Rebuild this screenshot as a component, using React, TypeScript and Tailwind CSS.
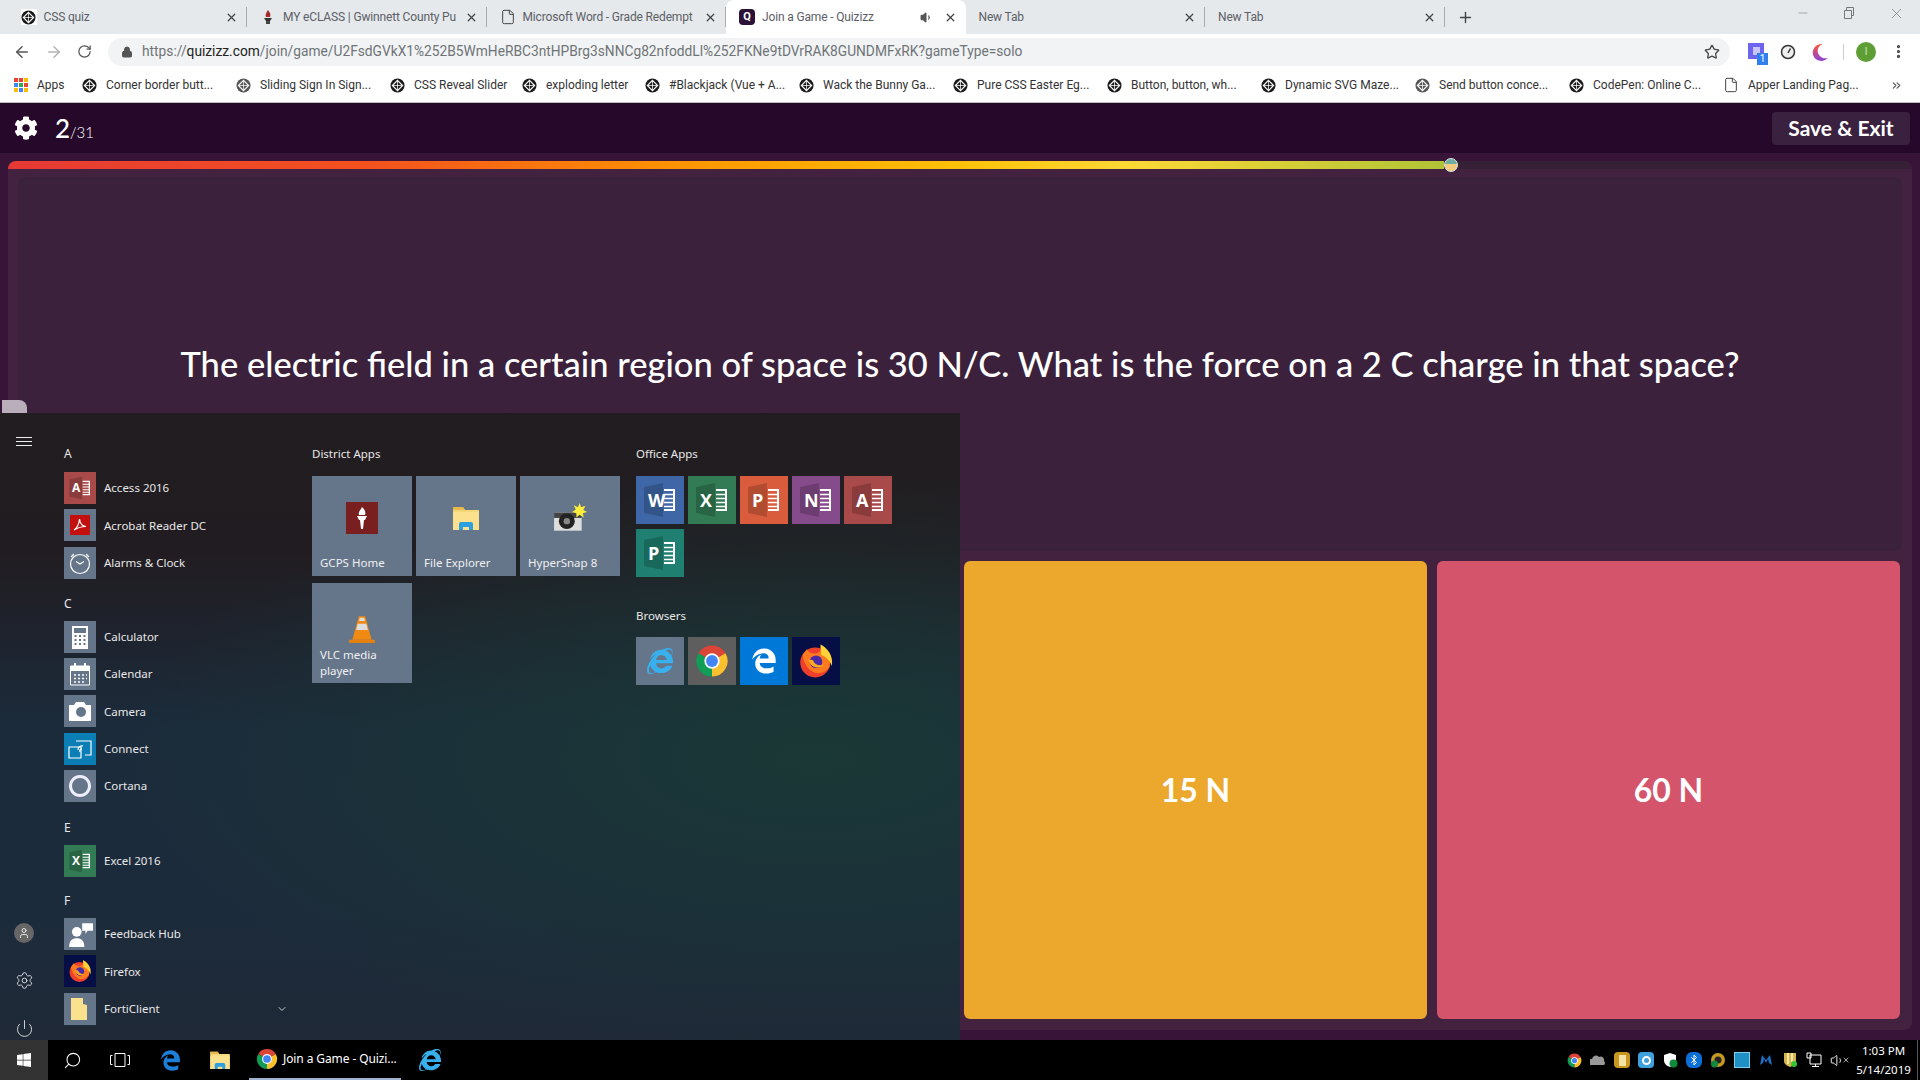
import { ReactNode } from "react";
import {
    ArrowLeft, ArrowRight, RotateCw, Lock, Star, MoreVertical, Settings, Power, Search,
    User, ChevronDown, Plus, X, Minus, ChevronsRight, Bluetooth, Volume1, File,
} from "lucide-react";
import { FaCog, FaInternetExplorer, FaEdgeLegacy, FaWindows } from "react-icons/fa";

function CodepenMark({ light = false }: { light?: boolean }) {
    return (
        <svg viewBox="0 0 16 16" className="w-[15px] h-[15px] shrink-0">
            <circle cx="8" cy="8" r="7.5" fill={light ? "#555" : "#1a1a1a"} />
            <path d="M8 2.5 13.5 8 8 13.5 2.5 8Z" fill="none" stroke="#fff" strokeWidth="1.2" />
            <path d="M8 2.5V13.5M2.5 8H13.5" stroke="#fff" strokeWidth="0.8" />
        </svg>
    );
}

function ChromeLogo({ size = 24 }: { size?: number }) {
    return (
        <svg viewBox="0 0 24 24" width={size} height={size} className="shrink-0">
            <path d="M12 12 2.47 6.5A11 11 0 0 1 21.53 6.5Z" fill="#db4437" />
            <path d="M12 12 2.47 6.5A11 11 0 0 0 12 23Z" fill="#0f9d58" />
            <path d="M12 12 21.53 6.5A11 11 0 0 1 12 23Z" fill="#fbc02d" />
            <circle cx="12" cy="12" r="5.4" fill="#fff" />
            <circle cx="12" cy="12" r="4.2" fill="#4285f4" />
        </svg>
    );
}

function FirefoxLogo({ size = 24 }: { size?: number }) {
    return (
        <svg viewBox="0 0 24 24" width={size} height={size} className="shrink-0">
            <circle cx="11.5" cy="13" r="10" fill="#ee3f2d" />
            <path d="M3 8C5 20 15 24 21 16 22 10 19 5 15 2 16 6 13 7 11 7 8 7 6 5 6 4Z" fill="#ff7a1f" />
            <path d="M15 1C19 3 24 8 22.500 15.500 21.500 11.500 18.500 9 15.500 8Z" fill="#ffd23a" />
            <circle cx="12" cy="12.500" r="4.200" fill="#4a2aa5" />
            <path d="M7 11C8 16 13 18 17.500 14.500 14 15.500 11 14.500 10 11.500Z" fill="#ffab1f" />
        </svg>
    );
}

function FolderIcon({ size = 32 }: { size?: number }) {
    return (
        <svg viewBox="0 0 32 32" width={size} height={size} className="shrink-0">
            <path d="M3 5h10l2 3h14v20H3Z" fill="#f5d77a" />
            <path d="M3 5h10l2 3H3Z" fill="#e9b949" />
            <path d="M3 10h26v18H3Z" fill="#fbe08e" />
            <path d="M9 22a2 2 0 0 1 2-2h10a2 2 0 0 1 2 2v6h-4v-3h-6v3H9Z" fill="#2c9fe0" />
        </svg>
    );
}

function Office({ bg, letter, size }: { bg: string; letter: string; size: number }) {
    return (
        <div className={`${bg} flex items-center justify-center shrink-0`} style={{ width: size, height: size }}>
            <svg viewBox="0 0 48 48" width={size} height={size}>
                <path d="M8 11 27 7V41L8 37Z" fill="#000" opacity="0.18" />
                <text x="12" y="30.5" fontSize="18" fontWeight="700" fontFamily="Open Sans, sans-serif" fill="#fff">{letter}</text>
                <path d="M28 14h10v20h-10" fill="none" stroke="#fff" strokeWidth="2" />
                <path d="M28 18.5h10M28 22.5h10M28 26.5h10M28 30.5h10" stroke="#fff" strokeWidth="1.6" />
            </svg>
        </div>
    );
}

function Tab({ icon, title, active = false, sound = false }: { icon?: ReactNode; title: string; active?: boolean; sound?: boolean }) {
    return (
        <div className={`relative w-[239.5px] h-[34px] shrink-0 flex items-center pl-[13px] pr-[9px] gap-[7px] text-[12px] tracking-[-0.15px] text-[#5c6066] ${active ? "bg-white rounded-t-lg" : ""}`}>
            {icon}
            <span className="flex-1 whitespace-nowrap">{title}</span>
            {sound && <Volume1 className="w-[13px] h-[13px] text-[#555] mr-1" fill="#555" />}
            <X className="w-[13px] h-[13px] text-[#444] shrink-0" strokeWidth={2.4} />
            {!active && <div className="absolute right-0 top-[7px] h-[20px] w-px bg-[#a8acb0]" />}
        </div>
    );
}

function Bookmark({ title, icon, light, width = "w-[154px]" }: { title: string; icon?: ReactNode; light?: boolean; width?: string }) {
    return (
        <div className={`${width} shrink-0 flex items-center gap-[9px] pl-2 text-[12px] text-[#333] whitespace-nowrap`}>
            {icon ?? <CodepenMark light={light} />}
            <span>{title}</span>
        </div>
    );
}

const bookmarks = [
    { title: "Corner border butt...", width: "w-[154px]" },
    { title: "Sliding Sign In Sign...", light: true, width: "w-[154px]" },
    { title: "CSS Reveal Slider", width: "w-[132px]" },
    { title: "exploding letter", width: "w-[123px]" },
    { title: "#Blackjack (Vue + A...", width: "w-[154px]" },
    { title: "Wack the Bunny Ga...", width: "w-[154px]" },
    { title: "Pure CSS Easter Eg...", width: "w-[154px]" },
    { title: "Button, button, wh...", width: "w-[154px]" },
    { title: "Dynamic SVG Maze...", width: "w-[154px]" },
    { title: "Send button conce...", light: true, width: "w-[154px]" },
    { title: "CodePen: Online C...", width: "w-[154px]" },
];

function BrowserChrome() {
    return (
        <div className="shrink-0 font-['Roboto',sans-serif]">
            <div className="h-[34px] bg-[#e6e9ec] flex items-center pl-[7.5px]">
                <Tab title="CSS quiz" icon={<div className="w-4 h-4 bg-white flex items-center justify-center shrink-0"><CodepenMark /></div>} />
                <Tab title="MY eCLASS | Gwinnett County Pu" icon={
                    <svg viewBox="0 0 16 16" className="w-4 h-4 shrink-0">
                        <path d="M8 1C10 4 11 5 10 8H6C5 6 6 4 8 1Z" fill="#a52a2a" />
                        <path d="M4 9h8l-2 3H6Z" fill="#333" />
                        <path d="M6 12h4v3H6Z" fill="#444" />
                    </svg>
                } />
                <Tab title="Microsoft Word - Grade Redempt" icon={<File className="w-4 h-4 shrink-0 text-[#444]" strokeWidth={1.5} />} />
                <Tab title="Join a Game - Quizizz" active sound icon={
                    <div className="w-4 h-4 rounded-sm bg-[#2d1238] text-white text-[11px] font-bold flex items-center justify-center shrink-0">Q</div>
                } />
                <Tab title="New Tab" />
                <Tab title="New Tab" />
                <Plus className="w-[17px] h-[17px] text-[#444] ml-[12px]" />
                <div className="flex-1 flex justify-end items-center gap-[33px] pr-[15px] pb-2 text-[#777]">
                    <Minus className="w-[14px] h-[14px]" strokeWidth={1} />
                    <svg viewBox="0 0 12 12" className="w-[12px] h-[12px]" fill="none" stroke="currentColor"><path d="M1.5 3.5h7v8h-7ZM3.5 3.5v-3h7v8h-2" /></svg>
                    <X className="w-[17px] h-[17px]" strokeWidth={1} />
                </div>
            </div>
            <div className="h-[34px] bg-white flex items-center pt-px">
                <div className="w-[108px] shrink-0 flex items-center gap-[14px] pl-[13px]">
                    <ArrowLeft className="w-[18px] h-[18px] text-[#555]" />
                    <ArrowRight className="w-[18px] h-[18px] text-[#b5b5b5]" />
                    <RotateCw className="w-[15px] h-[15px] text-[#555]" />
                </div>
                <div className="w-[1622px] h-[28px] shrink-0 rounded-full bg-[#f1f3f4] flex items-center pl-[13px] pr-[10px] text-[13.75px] text-[#707478] whitespace-nowrap">
                    <Lock className="w-[12px] h-[12px] text-[#555] mr-[9px]" fill="#555" />
                    <span>https://<span className="text-[#222]">quizizz.com</span>/join/game/U2FsdGVkX1%252B5WmHeRBC3ntHPBrg3sNNCg82nfoddLl%252FKNe9tDVrRAK8GUNDMFxRK?gameType=solo</span>
                    <Star className="w-[16px] h-[16px] text-[#444] ml-auto" />
                </div>
                <div className="flex-1 flex items-center pl-[18px] gap-[12px]">
                    <div className="relative w-[20px] h-[20px]">
                        <div className="w-[16px] h-[16px] mt-[1px] bg-[#6d64f0] flex items-center justify-center">
                            <div className="w-[7px] h-[8px] bg-[#c9c5fb]" />
                        </div>
                        <div className="absolute right-0 bottom-[-3px] w-[11px] h-[12px] bg-[#2f7ff0] text-white text-[10px] leading-[12px] text-center">1</div>
                    </div>
                    <svg viewBox="0 0 16 16" className="w-[16px] h-[16px]" fill="none" stroke="#333" strokeWidth="1.5"><circle cx="8" cy="8" r="6.5" fill="#eee" /><path d="M8 9 10.5 4.5" /></svg>
                    <svg viewBox="0 0 16 16" className="w-[18px] h-[18px] ml-[3px]"><defs><linearGradient id="moon" x1="0" y1="0" x2="0" y2="1"><stop offset="0" stopColor="#ff5a3c" /><stop offset="1" stopColor="#8b3fd9" /></linearGradient></defs><path d="M10 1A7.5 7.5 0 1 0 15 13 6.5 6.5 0 0 1 10 1Z" fill="url(#moon)" /></svg>
                    <div className="w-px h-[16px] bg-[#ccc] ml-[2px]" />
                    <div className="w-[20px] h-[20px] rounded-full bg-[#5f9e35] text-[#cde4b8] text-[10px] flex items-center justify-center">I</div>
                    <MoreVertical className="w-[17px] h-[17px] text-[#444] ml-[2px]" strokeWidth={2.5} />
                </div>
            </div>
            <div className="h-[35px] bg-white border-b border-[#bbb] flex items-center pl-[14px] pr-[17px]">
                <div className="w-[60px] shrink-0 flex items-center gap-[9px] text-[12px] text-[#333]">
                    <div className="grid grid-cols-3 gap-[1.5px] w-[14px] shrink-0">
                        {["bg-[#ea4335]", "bg-[#ea4335]", "bg-[#fbbc05]", "bg-[#4285f4]", "bg-[#34a853]", "bg-[#ea4335]", "bg-[#fbbc05]", "bg-[#4285f4]", "bg-[#fbbc05]"].map((c, i) => (
                            <div key={i} className={`h-[3.5px] ${c}`} />
                        ))}
                    </div>
                    <span>Apps</span>
                </div>
                {bookmarks.map(b => <Bookmark key={b.title} title={b.title} light={b.light} width={b.width} />)}
                <Bookmark title="Apper Landing Pag..." width="w-[140px]" icon={<File className="w-4 h-4 shrink-0 text-[#444]" strokeWidth={1.5} />} />
                <ChevronsRight className="w-[13px] h-[13px] text-[#555] ml-auto" />
            </div>
        </div>
    );
}

function AnswerCard({ color, text }: { color: string; text: string }) {
    return (
        <div className={`${color} w-[463px] h-[458px] rounded-md flex items-center justify-center text-white text-[32px] font-bold`}>
            {text}
        </div>
    );
}

function QuizPage() {
    return (
        <div className="h-[937px] flex flex-col bg-[#381438] font-['Lato',sans-serif] text-white">
            <div className="h-[50px] shrink-0 bg-[#26082a] flex items-center justify-between pl-[14px] pr-[10px]">
                <div className="flex items-baseline gap-[17px]">
                    <FaCog className="w-[24px] h-[24px] self-center" />
                    <div><span className="text-[26px] font-medium">2</span><span className="text-[15px] font-light">/31</span></div>
                </div>
                <div className="w-[138px] h-[33px] rounded bg-[#3a2140] flex items-center justify-center text-[21px] font-bold">Save &amp; Exit</div>
            </div>
            <div className="flex-1 pt-2 px-2 pb-[10px]">
                <div className="h-full rounded-lg bg-[#432240] flex flex-col pb-[11px]">
                    <div className="relative h-2 shrink-0 rounded-t-lg bg-[#362035]">
                        <div className="h-full w-[1436px] rounded-tl-lg bg-[linear-gradient(90deg,#e53935_0%,#f4511e_25%,#ff9800_48%,#ffc107_66%,#fdd835_78%,#b0c337_100%)]" />
                        <div className="absolute left-[1436px] top-[-3px] w-[14px] h-[14px] rounded-full border border-[#dfe8e8] bg-[linear-gradient(180deg,#6fae9f_45%,#f3cb7e_45%)]" />
                    </div>
                    <div className="mt-2 ml-[10px] mr-[10px] h-[374px] shrink-0 rounded-lg bg-[#3b213b] flex items-center justify-center text-[34.500px] font-medium">
                        The electric field in a certain region of space is 30 N/C. What is the force on a 2 C charge in that space?
                    </div>
                    <div className="flex-1 mt-[10px] pr-3 flex justify-end gap-[10px]">
                        <AnswerCard color="bg-[#eca82c]" text="15 N" />
                        <AnswerCard color="bg-[#d4546b]" text="60 N" />
                    </div>
                </div>
            </div>
        </div>
    );
}

function ListRow({ tile, title, chevron = false }: { tile: ReactNode; title: string; chevron?: boolean }) {
    return (
        <div className="h-[32px] flex items-center gap-2 text-[11.5px] text-[#e8e8e8]">
            {tile}
            <span className="flex-1">{title}</span>
            {chevron && <ChevronDown className="w-[12px] h-[12px] text-[#ccc]" />}
        </div>
    );
}

function GrayTile({ children, bg = "bg-[#65758a]" }: { children: ReactNode; bg?: string }) {
    return <div className={`${bg} w-[32px] h-[32px] shrink-0 flex items-center justify-center`}>{children}</div>;
}

function Letter({ ch }: { ch: string }) {
    return <div className="h-[17px] flex items-center text-[12px] text-[#e8e8e8]">{ch}</div>;
}

function BigTile({ icon, label }: { icon: ReactNode; label: string }) {
    return (
        <div className="relative w-[100px] h-[100px] bg-[#65758a] flex justify-center pt-[26px] text-[11.5px] leading-[16px] text-[#f0f0f0]">
            {icon}
            <div className="absolute left-2 bottom-[5px]">{label}</div>
        </div>
    );
}

function StartMenu() {
    return (
        <div className="absolute left-0 top-[413px] w-[960px] h-[627px] flex font-['Noto_Sans',sans-serif] bg-[radial-gradient(ellipse_at_85%_55%,#1a3836_0%,transparent_60%),linear-gradient(180deg,#221d20_0%,#211c21_22%,#1b2b3b_50%,#1c2b3b_80%,#1f2937_100%)]">
            <div className="w-[48px] shrink-0 flex flex-col items-center justify-between pt-[24px] pb-[2px] text-[#e8e8e8]">
                <svg viewBox="0 0 16 9" className="w-[16px] h-[9px]" fill="none" stroke="#eee"><path d="M0 .5h16M0 4.500h16M0 8.500h16" /></svg>
                <div className="flex flex-col items-center">
                    <div className="w-[20px] h-[20px] rounded-full bg-[#666] flex items-center justify-center"><User className="w-[12px] h-[12px]" /></div>
                    <Settings className="w-[19px] h-[19px] mt-[28.500px]" strokeWidth={1.1} />
                    <Power className="w-[19px] h-[19px] mt-[29px]" strokeWidth={1.1} />
                </div>
            </div>
            <div className="w-[224px] shrink-0 ml-4 pt-[32.500px] flex flex-col">
                <Letter ch="A" />
                <div className="mt-[9.500px] flex flex-col gap-[5.33px]">
                    <ListRow title="Access 2016" tile={<Office bg="bg-[#a94a4a]" letter="A" size={32} />} />
                    <ListRow title="Acrobat Reader DC" tile={<GrayTile><svg viewBox="0 0 20 20" className="w-5 h-5"><path d="M0 0h20v20H0Z" fill="#c40f0f" /><path d="M4 15C7 13 9 9 9.500 4 10 9 12 11 16 11.500 12 11.500 8 12.500 4 15Z" fill="none" stroke="#fff" strokeWidth="1.2" /></svg></GrayTile>} />
                    <ListRow title="Alarms &amp; Clock" tile={<GrayTile><svg viewBox="0 0 24 24" className="w-[24px] h-[24px]" fill="none" stroke="#fff" strokeWidth="1.2"><circle cx="12" cy="13" r="9.5" /><path d="M8 10.5 12 13l4-2.5M3 6l3-3M21 6l-3-3" /></svg></GrayTile>} />
                </div>
                <div className="mt-[16.500px]"><Letter ch="C" /></div>
                <div className="mt-[8.500px] flex flex-col gap-[5.33px]">
                    <ListRow title="Calculator" tile={<GrayTile><svg viewBox="0 0 24 24" className="w-[24px] h-[24px]"><path d="M4 1h16v23H4Z" fill="#fff" /><path d="M6 3h12v5H6Z" fill="#65758a" /><path d="M6.5 11h2M11 11h2M15.5 11h2M6.5 15h2M11 15h2M15.5 15h2M6.5 19h2M11 19h2M15.5 19h2" stroke="#65758a" strokeWidth="2" /></svg></GrayTile>} />
                    <ListRow title="Calendar" tile={<GrayTile><svg viewBox="0 0 24 24" className="w-[24px] h-[24px]"><path d="M2.5 4h19v19h-19Z" fill="none" stroke="#fff" /><path d="M2.5 4h19v5h-19ZM6 1h2v4H6ZM16 1h2v4h-2Z" fill="#fff" /><path d="M6 13h2M10 13h2M14 13h2M18 13h1M6 16.5h2M10 16.5h2M14 16.5h2M18 16.5h1M6 20h2M10 20h2M14 20h2" stroke="#fff" strokeWidth="1.6" /></svg></GrayTile>} />
                    <ListRow title="Camera" tile={<GrayTile><svg viewBox="0 0 24 24" className="w-[24px] h-[24px]"><path d="M1 6h5l2-3h8l2 3h5v16H1Z" fill="#fff" /><circle cx="13" cy="13" r="5" fill="#65758a" /></svg></GrayTile>} />
                    <ListRow title="Connect" tile={<GrayTile bg="bg-[#0b7fb5]"><svg viewBox="0 0 24 24" className="w-[24px] h-[24px]" fill="none" stroke="#fff" strokeWidth="1.2"><path d="M8 4h15v14h-6M1 10h12v11H1Z" /><path d="M10 13a4 4 0 0 1 5-4M12 15a2 2 0 0 1 2-3" /></svg></GrayTile>} />
                    <ListRow title="Cortana" tile={<GrayTile><div className="w-[22px] h-[22px] rounded-full border-[3px] border-[#eef]" /></GrayTile>} />
                </div>
                <div className="mt-[17.500px]"><Letter ch="E" /></div>
                <div className="mt-[8.500px]"><ListRow title="Excel 2016" tile={<Office bg="bg-[#327b54]" letter="X" size={32} />} /></div>
                <div className="mt-[15.500px]"><Letter ch="F" /></div>
                <div className="mt-[8.500px] flex flex-col gap-[5.33px]">
                    <ListRow title="Feedback Hub" tile={<GrayTile><svg viewBox="0 0 24 24" className="w-[26px] h-[26px]" fill="#fff"><circle cx="9" cy="10" r="4.5" /><path d="M2 24c0-6 3-8 7-8s7 2 7 8ZM14 2h10v7h-5l-2 3V9h-3Z" /></svg></GrayTile>} />
                    <ListRow title="Firefox" tile={<GrayTile bg="bg-[#050f45]"><FirefoxLogo size={24} /></GrayTile>} />
                    <ListRow title="FortiClient" chevron tile={<GrayTile><svg viewBox="0 0 24 24" className="w-[24px] h-[24px]"><path d="M3 1h12v6l4 1v15H3Z" fill="#fbe08e" /></svg></GrayTile>} />
                </div>
            </div>
            <div className="w-[324px] shrink-0 ml-6 pt-[32px]">
                <div className="h-[17px] flex items-center text-[11.5px] text-[#e8e8e8]">District Apps</div>
                <div className="mt-[13px] pt-px flex flex-wrap gap-x-1 gap-y-[7px]">
                    <BigTile label="GCPS Home" icon={
                        <div className="w-[32px] h-[32px] bg-[#7a1f1f] flex items-center justify-center">
                            <svg viewBox="0 0 16 24" className="h-[24px] w-[16px]" fill="#fff"><path d="M8 1C11 4 12 6 11 9H5C4 6 6 5 8 1ZM3 10h10l-2 4h-1l-1 9H7l-1-9H5Z" /></svg>
                        </div>
                    } />
                    <BigTile label="File Explorer" icon={<FolderIcon size={32} />} />
                    <BigTile label="HyperSnap 8" icon={
                        <svg viewBox="0 0 32 32" className="w-[34px] h-[34px]">
                            <path d="M1 10h26v17H1Z" fill="#ddd" />
                            <path d="M1 10h26v5H1Z" fill="#444" />
                            <circle cx="13" cy="18" r="7.5" fill="#222" />
                            <circle cx="13" cy="18" r="3" fill="#888" />
                            <path d="M25 1l1.5 4 4-1.5-2 4 3.500 2-4 1 1 4-4-2.500-3 2.500 0-4-4-1 3.500-2.500-2-4 4 2Z" fill="#ffef3a" />
                        </svg>
                    } />
                    <div className="relative w-[100px] h-[100px] bg-[#65758a] flex justify-center pt-[31px] text-[11.5px] leading-[16px] text-[#f0f0f0]">
                        <svg viewBox="0 0 28 28" className="w-[30px] h-[30px]">
                            <path d="M11 2h6l6 22H5Z" fill="#f08a12" />
                            <path d="M10 9h8l1.500 6h-11ZM12 3.500h4l.8 3h-5.600Z" fill="#ddd" />
                            <path d="M2 24h24v3H2Z" fill="#e9800c" />
                        </svg>
                        <div className="absolute left-2 bottom-[4px] w-[80px]">VLC media player</div>
                    </div>
                </div>
            </div>
            <div className="pt-[32px]">
                <div className="h-[17px] flex items-center text-[11.5px] text-[#e8e8e8]">Office Apps</div>
                <div className="mt-[13px] pt-px w-[260px] flex flex-wrap gap-x-1 gap-y-[5px]">
                    <Office bg="bg-[#3f67a8]" letter="W" size={48} />
                    <Office bg="bg-[#327b54]" letter="X" size={48} />
                    <Office bg="bg-[#d95d3c]" letter="P" size={48} />
                    <Office bg="bg-[#854b8b]" letter="N" size={48} />
                    <Office bg="bg-[#a94a4a]" letter="A" size={48} />
                    <Office bg="bg-[#1f7f71]" letter="P" size={48} />
                </div>
                <div className="mt-[30px] h-[17px] flex items-center text-[11.5px] text-[#e8e8e8]">Browsers</div>
                <div className="mt-[13px] flex gap-1">
                    <div className="w-[48px] h-[48px] bg-[#65758a] flex items-center justify-center"><FaInternetExplorer className="w-[26px] h-[26px] text-[#39b0ee]" /></div>
                    <div className="w-[48px] h-[48px] bg-[#5e5e5e] flex items-center justify-center"><ChromeLogo size={34} /></div>
                    <div className="w-[48px] h-[48px] bg-[#0078d7] flex items-center justify-center"><FaEdgeLegacy className="w-[26px] h-[26px] text-white" /></div>
                    <div className="w-[48px] h-[48px] bg-[#050f45] flex items-center justify-center"><FirefoxLogo size={36} /></div>
                </div>
            </div>
        </div>
    );
}

function TrayIcons() {
    return (
        <div className="flex items-center gap-[8px]">
            <ChromeLogo size={15} />
            <svg viewBox="0 0 16 16" className="w-4 h-4" fill="#999"><path d="M1 13a3 3 0 0 1 1-6 4 4 0 0 1 7-2 3.500 3.500 0 0 1 5 4 2.500 2.500 0 0 1 0 4Z" /></svg>
            <div className="w-4 h-4 rounded-sm bg-[#c9971f] flex items-center justify-center"><div className="w-[7px] h-[11px] bg-[#f4e3a4]" /></div>
            <div className="w-4 h-4 rounded-sm bg-[#3fa0e0] flex items-center justify-center"><div className="w-[9px] h-[9px] rounded-full border-2 border-white" /></div>
            <svg viewBox="0 0 16 16" className="w-4 h-4"><path d="M8 1 14 3V8C14 12 11 14 8 15 5 14 2 12 2 8V3Z" fill="#fff" /><circle cx="11.500" cy="11.500" r="4" fill="#10893e" /></svg>
            <div className="w-4 h-4 rounded-md bg-[#0a6fd8] flex items-center justify-center"><Bluetooth className="w-3 h-3 text-white" /></div>
            <svg viewBox="0 0 16 16" className="w-4 h-4"><circle cx="8" cy="8" r="7" fill="#c59a23" /><circle cx="8" cy="8" r="3.500" fill="#222" /><circle cx="4.500" cy="12" r="3.500" fill="#10893e" /></svg>
            <div className="w-4 h-4 bg-[#1f8fc4] border border-[#7fd0ee]" />
            <svg viewBox="0 0 16 16" className="w-4 h-4"><path d="M2 13 4 3 8 8 12 3 14 13 11 11 10 7 8 11 6 7 5 11Z" fill="#1c6fc4" /></svg>
            <svg viewBox="0 0 16 16" className="w-4 h-4"><path d="M2 1H14V9C14 12 11 14 8 15 5 14 2 12 2 9Z" fill="#d8b54a" /><path d="M5 1h2v11H5ZM9 1h2v9H9Z" fill="#f5e6ae" /><circle cx="12" cy="12" r="3" fill="#35c435" /></svg>
            <svg viewBox="0 0 16 16" className="w-4 h-4" fill="none" stroke="#fff"><path d="M4 3h11v9H4ZM1 1h4v5H1ZM9.500 12v2M6 14.500h7" /></svg>
            <div className="flex items-center w-[18px]">
                <Volume1 className="w-[15px] h-[15px] text-white shrink-0" strokeWidth={1.5} />
                <X className="w-[8px] h-[8px] text-white shrink-0 -ml-[3px]" />
            </div>
        </div>
    );
}

function Taskbar() {
    return (
        <div className="h-[40px] shrink-0 bg-black flex items-center font-['Noto_Sans',sans-serif] text-white">
            <div className="w-[48px] h-full bg-[#333] flex items-center justify-center"><FaWindows className="w-[16px] h-[16px]" /></div>
            <div className="w-[48px] flex justify-center"><Search className="w-[19px] h-[19px] -scale-x-100" strokeWidth={1.3} /></div>
            <div className="w-[48px] flex justify-center">
                <svg viewBox="0 0 20 14" className="w-[20px] h-[14px]" fill="none" stroke="#fff"><path d="M5 .5h10v13H5ZM2.500 2.500h-2v9h2M17.500 2.500h2v9h-2" /></svg>
            </div>
            <div className="w-[50px] pl-[3px] flex justify-center"><FaEdgeLegacy className="w-[21px] h-[21px] text-[#1c7fd8]" /></div>
            <div className="w-[50px] pl-[2px] flex justify-center"><FolderIcon size={24} /></div>
            <div className="w-[152px] h-full flex items-center pl-[7px] gap-[5px] text-[12px] tracking-[-0.1px] border-b-2 border-[#9fb2cf] whitespace-nowrap ml-[5px]">
                <ChromeLogo size={22} />
                <span>Join a Game - Quizi...</span>
            </div>
            <div className="w-[58px] flex justify-center"><FaInternetExplorer className="w-[22px] h-[22px] text-[#39b0ee]" /></div>
            <div className="flex-1 flex justify-end items-center pr-[2px]">
                <TrayIcons />
                <div className="ml-[4px] w-[63px] text-[11.5px] leading-[19px] text-center">
                    <div>1:03 PM</div>
                    <div>5/14/2019</div>
                </div>
                <div className="ml-[2px] w-px h-[40px] bg-[#555]" />
            </div>
        </div>
    );
}

export default function App() {
    return (
        <div className="relative w-[1920px] h-[1080px] overflow-hidden flex flex-col bg-black">
            <BrowserChrome />
            <QuizPage />
            <Taskbar />
            <div className="absolute left-[2px] top-[400px] w-[25px] h-[13px] rounded-tr-lg bg-[#b9aeb9]" />
            <StartMenu />
        </div>
    );
}
